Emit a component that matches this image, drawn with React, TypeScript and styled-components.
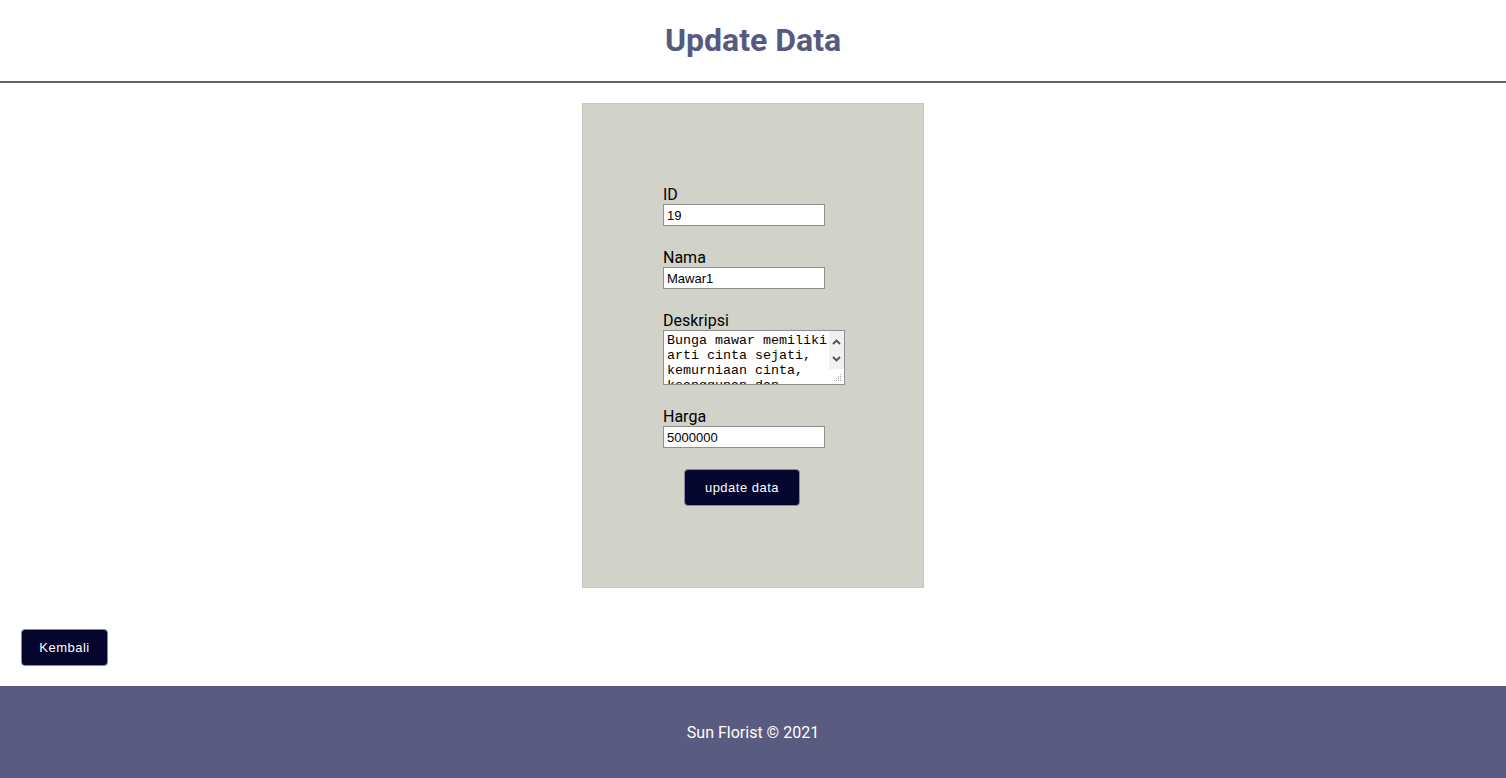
import React from "react";
import styled, { createGlobalStyle } from "styled-components";

const Global = createGlobalStyle`
  html, body { margin: 0; padding: 0; background: #ffffff; }
  body { font-family: Roboto, "Liberation Sans", Arial, sans-serif; color: #000; }
  * { box-sizing: border-box; }
`;

const Page = styled.div`
  display: flex;
  flex-direction: column;
  min-height: 778px;
`;

const Header = styled.header`
  height: 83px;
  padding-bottom: 2px;
  display: flex;
  align-items: center;
  justify-content: center;
  border-bottom: 2px solid #626262;
`;

const Title = styled.h1`
  margin: 0;
  font-family: Roboto, sans-serif;
  font-weight: 700;
  font-size: 32px;
  color: #575a80;
`;

const Main = styled.main`
  flex: 1;
  display: flex;
  flex-direction: column;
  padding-top: 20px;
`;

const FormBox = styled.form`
  align-self: center;
  width: 342px;
  height: 485px;
  background: #d1d2c9;
  border: 1px solid #c4c5bc;
  padding: 79px 0 0 80px;
  display: flex;
  flex-direction: column;
  align-items: flex-start;
`;

const Field = styled.div`
  display: flex;
  flex-direction: column;
  margin-bottom: 20px;
`;

const Label = styled.label`
  font-family: Roboto, sans-serif;
  font-size: 16px;
  line-height: 19px;
  padding-top: 2px;
  color: #000;
`;

const TextInput = styled.input`
  width: 162px;
  height: 22px;
  border: 1px solid #8f8f8f;
  background: #fff;
  padding: 1px 3px;
  font-family: "Liberation Sans", Arial, sans-serif;
  font-size: 13px;
  color: #000;
  outline: none;
`;

const TextAreaWrap = styled.div`
  position: relative;
  width: 182px;
  height: 55px;
`;

const TextArea = styled.textarea`
  display: block;
  width: 182px;
  height: 55px;
  border: 1px solid #8f8f8f;
  background: #fff;
  padding: 2px 3px;
  font-family: "Liberation Mono", "Courier New", monospace;
  font-size: 13.33px;
  line-height: 15px;
  color: #000;
  overflow-y: scroll;
  resize: none;
  outline: none;

  &::-webkit-scrollbar {
    width: 15px;
    background: #f1f1f1;
  }
  &::-webkit-scrollbar-track {
    background: #f1f1f1;
  }
  &::-webkit-scrollbar-thumb {
    background: #f1f1f1;
  }
  &::-webkit-scrollbar-corner {
    background: #ffffff;
  }
`;

const ScrollMarks = styled.svg`
  position: absolute;
  right: 1px;
  top: 1px;
  width: 15px;
  height: 53px;
  pointer-events: none;
`;

const DarkButton = styled.button<{ $w: number }>`
  width: ${(p) => p.$w}px;
  height: 37px;
  background: #05052d;
  color: #ffffff;
  border: 1px solid #8a8a96;
  border-radius: 4px;
  font-family: "Liberation Sans", Arial, sans-serif;
  font-size: 13px;
  letter-spacing: 0.5px;
  cursor: pointer;
  padding: 0;
`;

const SubmitWrap = styled.div`
  margin-left: 21px;
  margin-top: 1px;
`;

const BackRow = styled.div`
  padding: 41px 0 20px 21px;
`;

const Footer = styled.footer`
  height: 92px;
  background: #5a5b80;
  color: #ffffff;
  display: flex;
  align-items: center;
  justify-content: center;
  font-family: Roboto, sans-serif;
  font-size: 16px;
`;

export default function App() {
  return (
    <Page>
      <Global />
      <Header>
        <Title>Update Data</Title>
      </Header>
      <Main>
        <FormBox onSubmit={(e) => e.preventDefault()}>
          <Field>
            <Label>ID</Label>
            <TextInput defaultValue="19" />
          </Field>
          <Field>
            <Label>Nama</Label>
            <TextInput defaultValue="Mawar1" />
          </Field>
          <Field>
            <Label>Deskripsi</Label>
            <TextAreaWrap>
              <TextArea defaultValue="Bunga mawar memiliki arti cinta sejati, kemurniaan cinta, keanggunan dan keindahan." />
              <ScrollMarks viewBox="0 0 15 53">
                <rect x="0" y="0" width="15" height="38" fill="#f1f1f1" />
                <rect x="0" y="38" width="15" height="15" fill="#ffffff" />
                <path d="M4 13 L7.5 9.5 L11 13" fill="none" stroke="#505050" strokeWidth="1.8" />
                <path d="M4 26 L7.5 29.5 L11 26" fill="none" stroke="#505050" strokeWidth="1.8" />
                <g fill="#a0a0a0">
                  <rect x="11" y="43" width="1" height="1" />
                  <rect x="9" y="45" width="1" height="1" />
                  <rect x="11" y="45" width="1" height="1" />
                  <rect x="7" y="47" width="1" height="1" />
                  <rect x="9" y="47" width="1" height="1" />
                  <rect x="11" y="47" width="1" height="1" />
                  <rect x="5" y="49" width="1" height="1" />
                  <rect x="7" y="49" width="1" height="1" />
                  <rect x="9" y="49" width="1" height="1" />
                  <rect x="11" y="49" width="1" height="1" />
                </g>
              </ScrollMarks>
            </TextAreaWrap>
          </Field>
          <Field>
            <Label>Harga</Label>
            <TextInput defaultValue="5000000" />
          </Field>
          <SubmitWrap>
            <DarkButton $w={116} type="submit">update data</DarkButton>
          </SubmitWrap>
        </FormBox>
        <BackRow>
          <DarkButton $w={87} type="button">Kembali</DarkButton>
        </BackRow>
      </Main>
      <Footer>Sun Florist © 2021</Footer>
    </Page>
  );
}
